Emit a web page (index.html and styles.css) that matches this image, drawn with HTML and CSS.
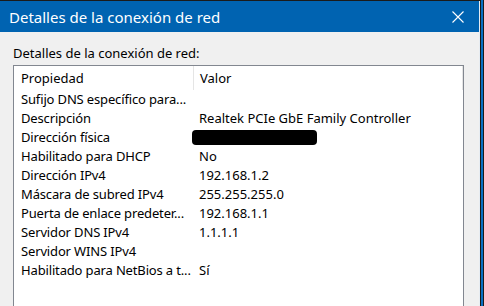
FILE: index.html
```html
<!DOCTYPE html>
<html lang="es">
<head>
    <meta charset="UTF-8">
    <title>Detalles de la conexión de red</title>
    <link rel="stylesheet" href="styles.css">
</head>
<body>
    <div class="window">
        <header class="titlebar">
            <span class="title">Detalles de la conexión de red</span>
            <svg class="close" width="12" height="12" viewBox="0 0 12 12">
                <path d="M0.5 0.5 L11.5 11.5 M11.5 0.5 L0.5 11.5" stroke="#fff" stroke-width="1.1" fill="none"/>
            </svg>
        </header>
        <main class="content">
            <p class="label">Detalles de la conexión de red:</p>
            <div class="listbox">
                <div class="row head">
                    <span class="col-prop">Propiedad</span>
                    <span class="col-val">Valor</span>
                </div>
                <div class="row"><span class="col-prop">Sufijo DNS específico para...</span><span class="col-val"></span></div>
                <div class="row"><span class="col-prop">Descripción</span><span class="col-val">Realtek PCIe GbE Family Controller</span></div>
                <div class="row"><span class="col-prop">Dirección física</span><span class="col-val"><span class="redacted"></span></span></div>
                <div class="row"><span class="col-prop">Habilitado para DHCP</span><span class="col-val">No</span></div>
                <div class="row"><span class="col-prop">Dirección IPv4</span><span class="col-val">192.168.1.2</span></div>
                <div class="row"><span class="col-prop">Máscara de subred IPv4</span><span class="col-val">255.255.255.0</span></div>
                <div class="row"><span class="col-prop">Puerta de enlace predeter...</span><span class="col-val">192.168.1.1</span></div>
                <div class="row"><span class="col-prop">Servidor DNS IPv4</span><span class="col-val">1.1.1.1</span></div>
                <div class="row"><span class="col-prop">Servidor WINS IPv4</span><span class="col-val"></span></div>
                <div class="row"><span class="col-prop">Habilitado para NetBios a t...</span><span class="col-val">Sí</span></div>
            </div>
        </main>
    </div>
    <div class="edge"></div>
</body>
</html>
```

FILE: styles.css
```css
/* Window frame */
body {
    margin: 0;
    width: 484px;
    height: 306px;
    overflow: hidden;
    display: flex;
    background-color: #1b1b1b;
    font-family: "Noto Sans", "Open Sans", sans-serif;
    color: #000;
}

.window {
    width: 479px;
    margin-top: 1px;
    display: flex;
    flex-direction: column;
    background-color: #f0f0f0;
    border-right: 1px solid #e6ecf2;
}

.edge {
    width: 2px;
    margin-left: 1px;
    background-color: #0a6fc2;
}

.titlebar {
    height: 31px;
    flex-shrink: 0;
    background-color: #0063b1;
    color: #fff;
    display: flex;
    align-items: center;
    justify-content: space-between;
    padding: 0 15px 0 9px;
}

.title {
    font-size: 15px;
}

.close {
    display: block;
}

/* Content */
.content {
    flex: 1;
    padding: 0 15px 0 13px;
    display: flex;
    flex-direction: column;
}

.label {
    margin: 13px 0 3px;
    font-size: 13px;
    line-height: 17px;
}

.listbox {
    flex: 1;
    background-color: #fff;
    border: 1px solid #828790;
    border-bottom: none;
    font-size: 13px;
}

.row {
    display: flex;
    height: 19px;
    line-height: 19px;
}

.row.head {
    height: 24px;
    line-height: 24px;
}

.col-prop {
    width: 172px;
    padding-left: 7px;
    white-space: nowrap;
    letter-spacing: -0.15px;
}

.head .col-prop {
    letter-spacing: 0;
}

.col-val {
    flex: 1;
    padding-left: 6px;
    white-space: nowrap;
}

.head .col-val {
    border-left: 1px solid #e5e5e5;
    border-right: 1px solid #e5e5e5;
}

.redacted {
    display: inline-block;
    width: 125px;
    height: 15px;
    margin-left: -7px;
    margin-top: 2px;
    vertical-align: top;
    background-color: #000;
    border-radius: 4px;
}
```
